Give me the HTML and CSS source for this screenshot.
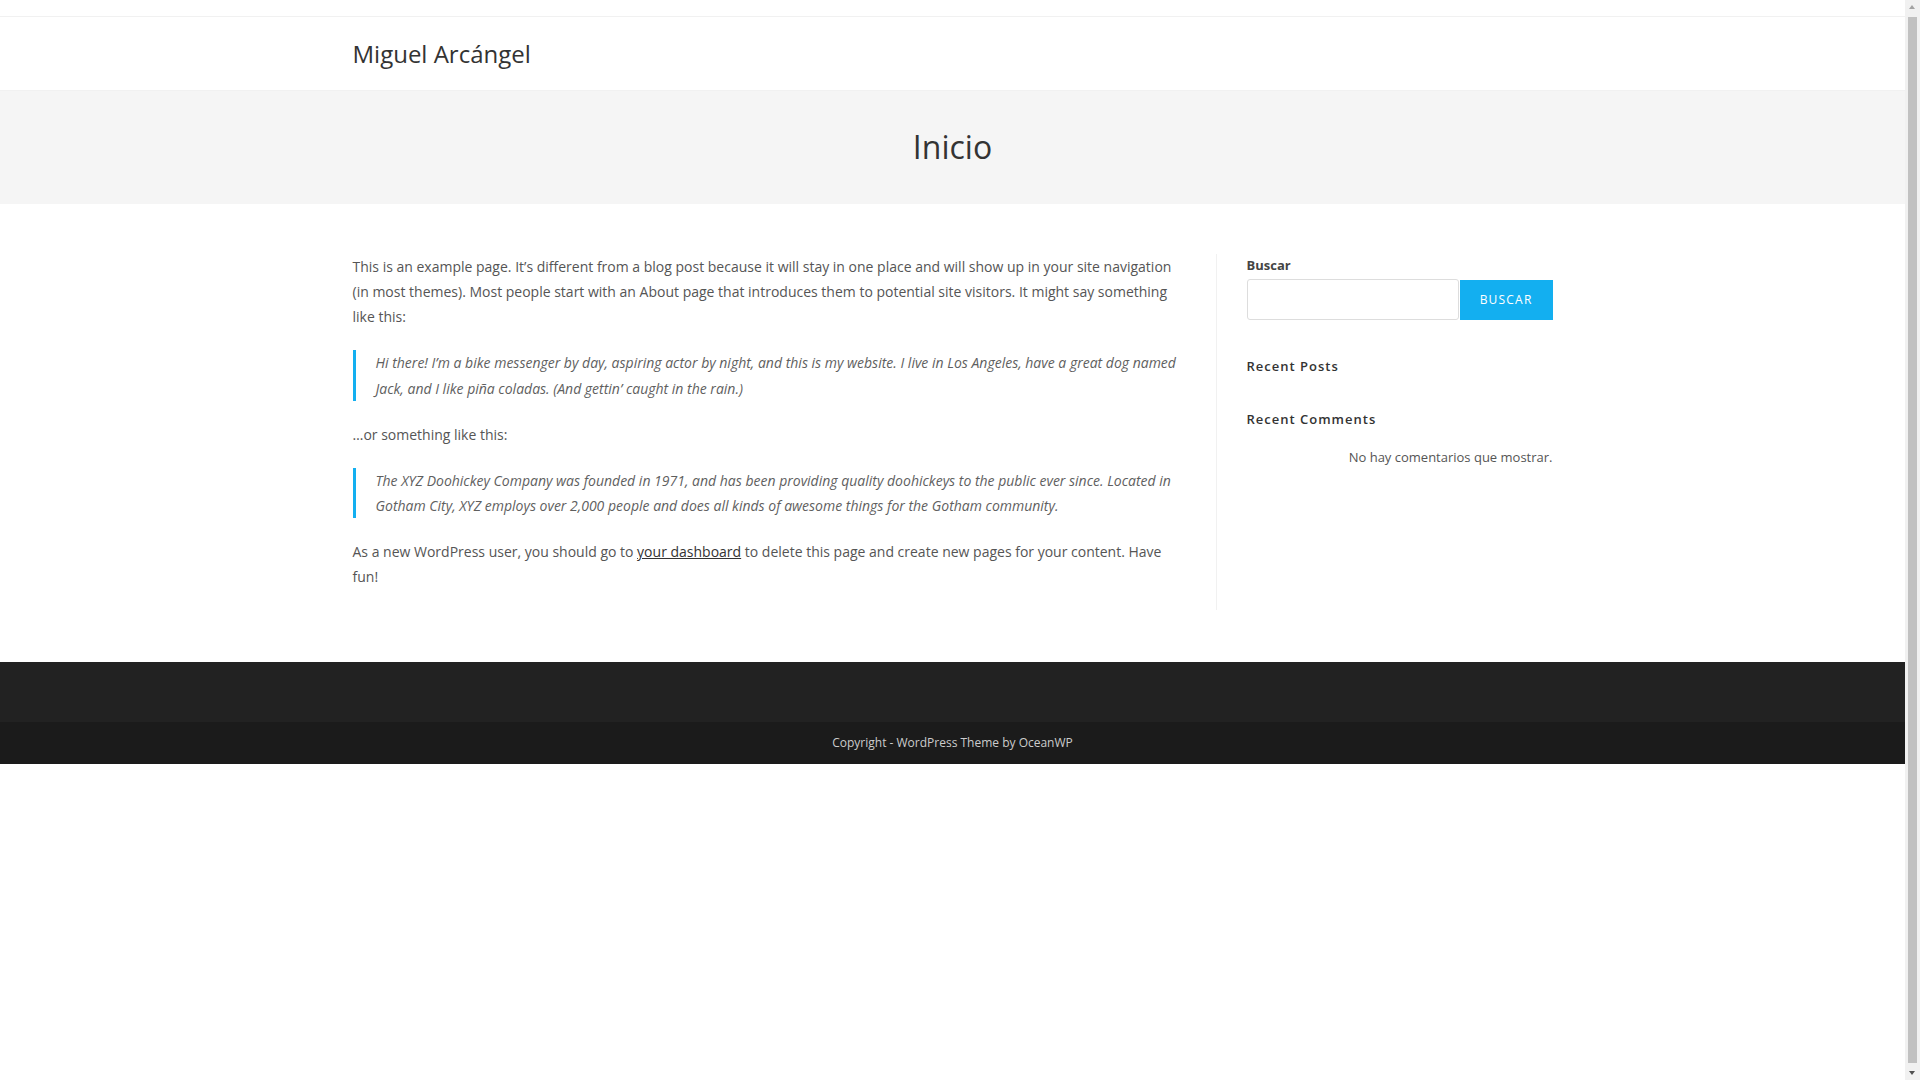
FILE: index.html
```html
<!DOCTYPE html>
<html lang="es">
<head>
<meta charset="utf-8">
<title>Inicio – Miguel Arcángel</title>
<link rel="stylesheet" href="styles.css">
</head>
<body>
<div class="page">
  <div class="top-bar"></div>
  <header class="site-header">
    <div class="container header-inner">
      <a class="site-logo" href="#">Miguel Arcángel</a>
    </div>
  </header>
  <section class="page-header">
    <h1 class="page-title">Inicio</h1>
  </section>
  <main class="main">
    <div class="container content-wrap">
      <article class="content-area">
        <p>This is an example page. It’s different from a blog post because it will stay in one place and will show up in your site navigation (in most themes). Most people start with an About page that introduces them to potential site visitors. It might say something like this:</p>
        <blockquote class="quote"><p>Hi there! I’m a bike messenger by day, aspiring actor by night, and this is my website. I live in Los Angeles, have a great dog named Jack, and I like piña coladas. (And gettin’ caught in the rain.)</p></blockquote>
        <p>…or something like this:</p>
        <blockquote class="quote"><p>The XYZ Doohickey Company was founded in 1971, and has been providing quality doohickeys to the public ever since. Located in Gotham City, XYZ employs over 2,000 people and does all kinds of awesome things for the Gotham community.</p></blockquote>
        <p>As a new WordPress user, you should go to <a class="text-link" href="#">your dashboard</a> to delete this page and create new pages for your content. Have fun!</p>
      </article>
      <aside class="sidebar">
        <div class="widget search-widget">
          <label class="search-label" for="s">Buscar</label>
          <div class="search-row">
            <input class="search-input" id="s" type="search">
            <button class="search-button" type="button">Buscar</button>
          </div>
        </div>
        <div class="widget">
          <h2 class="widget-title">Recent Posts</h2>
        </div>
        <div class="widget">
          <h2 class="widget-title">Recent Comments</h2>
          <div class="no-comments">No hay comentarios que mostrar.</div>
        </div>
      </aside>
    </div>
  </main>
  <footer class="site-footer">
    <div class="footer-widgets"></div>
    <div class="footer-bottom">Copyright - WordPress Theme by OceanWP</div>
  </footer>
</div>
<div class="scrollbar" aria-hidden="true">
  <div class="scroll-arrow scroll-up"></div>
  <div class="scroll-thumb"></div>
  <div class="scroll-arrow scroll-down"></div>
</div>
</body>
</html>
```

FILE: styles.css
```css
html {
  overflow: hidden;
}
body {
  margin: 0;
  font-family: "Open Sans", "Liberation Sans", sans-serif;
  font-size: 14px;
  line-height: 1.8;
  color: #555;
  background: #fff;
}
.page {
  width: calc(100% - 15px);
}
.container {
  width: 1200px;
  margin: 0 auto;
}
.top-bar {
  height: 16px;
  border-bottom: 1px solid #f1f1f1;
}
.site-header {
  border-bottom: 1px solid #f1f1f1;
}
.header-inner {
  height: 73px;
  display: flex;
  align-items: center;
}
.site-logo {
  font-size: 24px;
  line-height: 1;
  color: #333;
  text-decoration: none;
}
.page-header {
  background: #f5f5f5;
  padding: 34px 0;
  text-align: center;
}
.page-title {
  margin: 0;
  font-size: 32px;
  line-height: 1.4;
  font-weight: 400;
  color: #333;
}
.main {
  padding: 50px 0 52px;
}
.content-wrap {
  display: flex;
}
.content-area {
  width: 72%;
  box-sizing: border-box;
  padding-right: 30px;
  border-right: 1px solid #f1f1f1;
  display: flow-root;
}
.content-area p {
  margin: 0 0 20px;
}
.quote {
  margin: 21px 0;
  padding-left: 20px;
  border-left: 3px solid #13aff0;
  font-style: italic;
  color: #5f5f5f;
}
.quote p {
  margin: 0 !important;
}
.text-link {
  color: #333;
  text-decoration: underline;
}
.sidebar {
  width: 28%;
  box-sizing: border-box;
  padding-left: 30px;
  font-size: 13px;
}
.widget {
  margin-bottom: 40px;
}
.search-label {
  display: block;
  font-weight: 700;
  color: #444;
  margin-bottom: 2px;
}
.search-row {
  display: flex;
  align-items: center;
  gap: 1px;
}
.search-input {
  flex: 1;
  min-width: 0;
  height: 41px;
  box-sizing: border-box;
  border: 1px solid #ddd;
  border-radius: 3px;
  background: #fff;
  padding: 6px 12px;
  font-family: inherit;
  font-size: 14px;
  margin: 0;
}
.search-button {
  height: 40px;
  box-sizing: border-box;
  background: #13aff0;
  color: #fff;
  border: 0;
  border-radius: 0;
  padding: 0 20px;
  font-family: inherit;
  font-size: 12px;
  font-weight: 400;
  line-height: 1;
  letter-spacing: 0.1em;
  text-transform: uppercase;
  margin: 0;
}
.widget-title {
  margin: 0 0 20px;
  font-size: 13px;
  line-height: 1;
  font-weight: 600;
  letter-spacing: 1px;
  color: #333;
}
.no-comments {
  text-align: right;
}
.footer-widgets {
  background: #222;
  height: 60px;
}
.footer-bottom {
  background: #1b1b1b;
  padding: 15px 0;
  font-size: 12px;
  line-height: 12px;
  text-align: center;
  color: #ccc;
}

/* simulated browser scrollbar (overlays the viewport edge) */
.scrollbar {
  position: fixed;
  top: 0;
  right: 0;
  width: 15px;
  height: 100vh;
  background: #f1f1f1;
  display: flex;
  flex-direction: column;
  align-items: center;
}
.scroll-arrow {
  width: 15px;
  height: 15px;
  position: relative;
  flex: none;
}
.scroll-arrow::after {
  content: "";
  position: absolute;
  left: 4px;
  width: 0;
  height: 0;
  border-left: 3.5px solid transparent;
  border-right: 3.5px solid transparent;
}
.scroll-up::after {
  top: 5px;
  border-bottom: 4px solid #a3a3a3;
}
.scroll-down::after {
  top: 6px;
  border-top: 4px solid #505050;
}
.scroll-thumb {
  flex: 1;
  width: 9px;
  margin: 2px 0;
  background: #c1c1c1;
  border-radius: 0;
}
```
